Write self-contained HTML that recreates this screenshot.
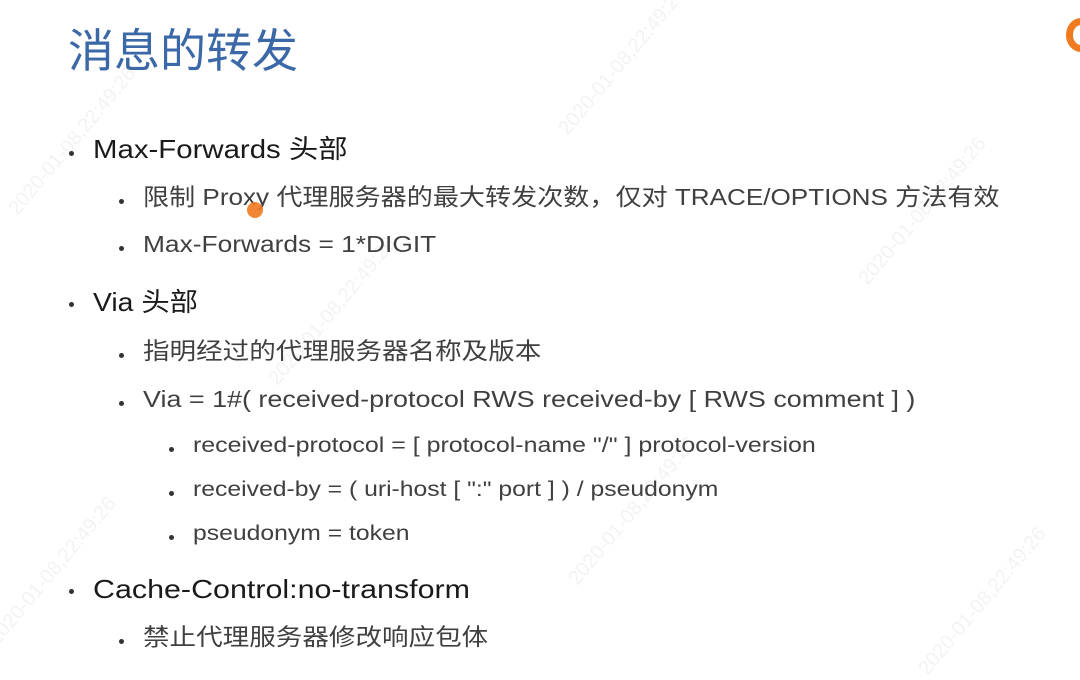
<!DOCTYPE html>
<html><head><meta charset="utf-8"><style>
body{margin:0;width:1080px;height:679px;background:#fff;overflow:hidden;position:relative;font-family:"Liberation Sans","Noto Sans CJK SC",sans-serif}
.t{position:absolute;white-space:nowrap;line-height:1;transform-origin:0 50%}
.h{left:68px;top:28px;font-size:46px;color:#3b68a6}
.l1{left:93px;font-size:26px;color:#1a1a1a}
.l2{left:143px;font-size:23.5px;color:#404040}
.l3{left:193px;font-size:21.5px;color:#404040}
.b{position:absolute;width:5px;height:5px;border-radius:50%;background:#333}
.wm{position:absolute;color:#f3f3f3;font-size:20px;transform:rotate(-50deg);white-space:nowrap}
</style></head><body>
<div class="wm" style="left:-20px;top:130px">2020-01-08,22:49:26</div>
<div class="wm" style="left:240px;top:300px">2020-01-08,22:49:26</div>
<div class="wm" style="left:530px;top:50px">2020-01-08,22:49:26</div>
<div class="wm" style="left:830px;top:200px">2020-01-08,22:49:26</div>
<div class="wm" style="left:-40px;top:560px">2020-01-08,22:49:26</div>
<div class="wm" style="left:540px;top:500px">2020-01-08,22:49:26</div>
<div class="wm" style="left:890px;top:590px">2020-01-08,22:49:26</div>
<div style="position:absolute;left:1066px;top:18px;width:30px;height:34px;border-radius:50%;border:7px solid #f07a20;box-sizing:border-box"></div>
<div class="t h">消息的转发</div>
<div class="b" style="left:69px;top:151px"></div><div class="t l1" style="top:136px;transform:scaleX(1.13)">Max-Forwards 头部</div>
<div class="b" style="left:119px;top:199px"></div><div class="t l2" style="top:186px;transform:scaleX(1.11)">限制 Proxy 代理服务器的最大转发次数，仅对 TRACE/OPTIONS 方法有效</div>
<div class="b" style="left:119px;top:246px"></div><div class="t l2" style="top:233px;transform:scaleX(1.12)">Max-Forwards = 1*DIGIT</div>
<div class="b" style="left:69px;top:302px"></div><div class="t l1" style="top:289px;transform:scaleX(1.09)">Via 头部</div>
<div class="b" style="left:119px;top:353px"></div><div class="t l2" style="top:340px;transform:scaleX(1.13)">指明经过的代理服务器名称及版本</div>
<div class="b" style="left:119px;top:401px"></div><div class="t l2" style="top:388px;transform:scaleX(1.145)">Via = 1#( received-protocol RWS received-by [ RWS comment ] )</div>
<div class="b" style="left:169px;top:447px"></div><div class="t l3" style="top:435px;transform:scaleX(1.16)">received-protocol = [ protocol-name "/" ] protocol-version</div>
<div class="b" style="left:169px;top:491px"></div><div class="t l3" style="top:479px;transform:scaleX(1.15)">received-by = ( uri-host [ ":" port ] ) / pseudonym</div>
<div class="b" style="left:169px;top:535px"></div><div class="t l3" style="top:523px;transform:scaleX(1.15)">pseudonym = token</div>
<div class="b" style="left:69px;top:589px"></div><div class="t l1" style="top:576px;transform:scaleX(1.17)">Cache-Control:no-transform</div>
<div class="b" style="left:119px;top:639px"></div><div class="t l2" style="top:626px;transform:scaleX(1.13)">禁止代理服务器修改响应包体</div>
<div style="position:absolute;left:247px;top:202px;width:16px;height:16px;border-radius:50%;background:#f07a20;opacity:.9"></div>
</body></html>
